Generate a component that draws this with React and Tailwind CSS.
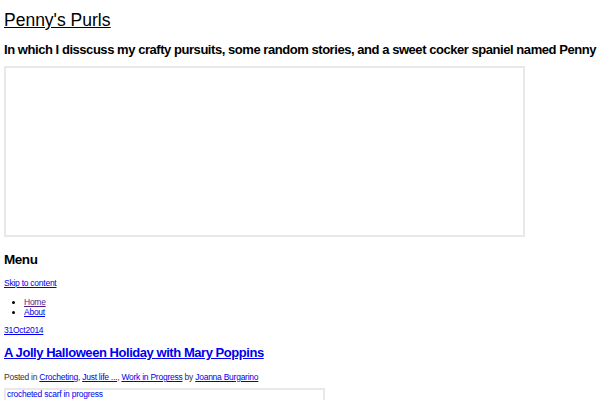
import React from 'react';

function App() {
    return (
        <div className="h-[400px] overflow-hidden bg-white px-1 text-black" style={{ fontFamily: '"Liberation Sans", Arial, sans-serif' }}>
            {/* Header */}
            <h1 className="pt-[10px] text-[17.5px] leading-[20px] underline">
                <a href="#">Penny's Purls</a>
            </h1>
            <h2 className="mt-[11px] whitespace-nowrap text-[13px] font-bold leading-[18px] tracking-[-0.45px]">
                In which I disscuss my crafty pursuits, some random stories, and a sweet cocker spaniel named Penny
            </h2>

            {/* Header image (not loaded) */}
            <div className="mt-[7px] h-[171px] w-[521px] border-2 border-[#e8e8e8]"></div>

            {/* Navigation */}
            <h3 className="mt-[14px] text-[13.5px] font-bold leading-[18px] tracking-[-0.45px]">Menu</h3>
            <a href="#" className="mt-[9px] block text-[8.5px] leading-[10px] tracking-[-0.25px] text-[#0000ee] underline">Skip to content</a>
            <ul className="mt-[9px] list-disc pl-[20px] text-[8.5px] leading-[10px] tracking-[-0.25px]">
                <li><a href="#" className="text-[#551a8b] underline">Home</a></li>
                <li><a href="#" className="text-[#0000ee] underline">About</a></li>
            </ul>

            {/* Post */}
            <a href="#" className="mt-[8px] block text-[8.5px] leading-[10px] tracking-[-0.25px] text-[#0000ee] underline">31Oct2014</a>
            <h2 className="mt-[9px] text-[13px] font-bold leading-[18px] tracking-[-0.45px]">
                <a href="#" className="text-[#0000ee] underline">A Jolly Halloween Holiday with Mary Poppins</a>
            </h2>
            <p className="mt-[10px] text-[8.5px] leading-[10px] tracking-[-0.25px] text-[#333]">
                Posted in <a href="#" className="text-[#0000ee] underline">Crocheting</a>,{' '}
                <a href="#" className="text-[#0000ee] underline">Just life ...</a>,{' '}
                <a href="#" className="text-[#0000ee] underline">Work in Progress</a> by{' '}
                <a href="#" className="text-[#0000ee] underline">Joanna Burgarino</a>
            </p>
            <div className="mt-[6px] h-[40px] w-[321px] border-2 border-[#e8e8e8] px-[1px] text-[8.5px] leading-[9px] tracking-[-0.25px] text-[#0000ee]">
                crocheted scarf in progress
            </div>
        </div>
    );
}

export default App;
